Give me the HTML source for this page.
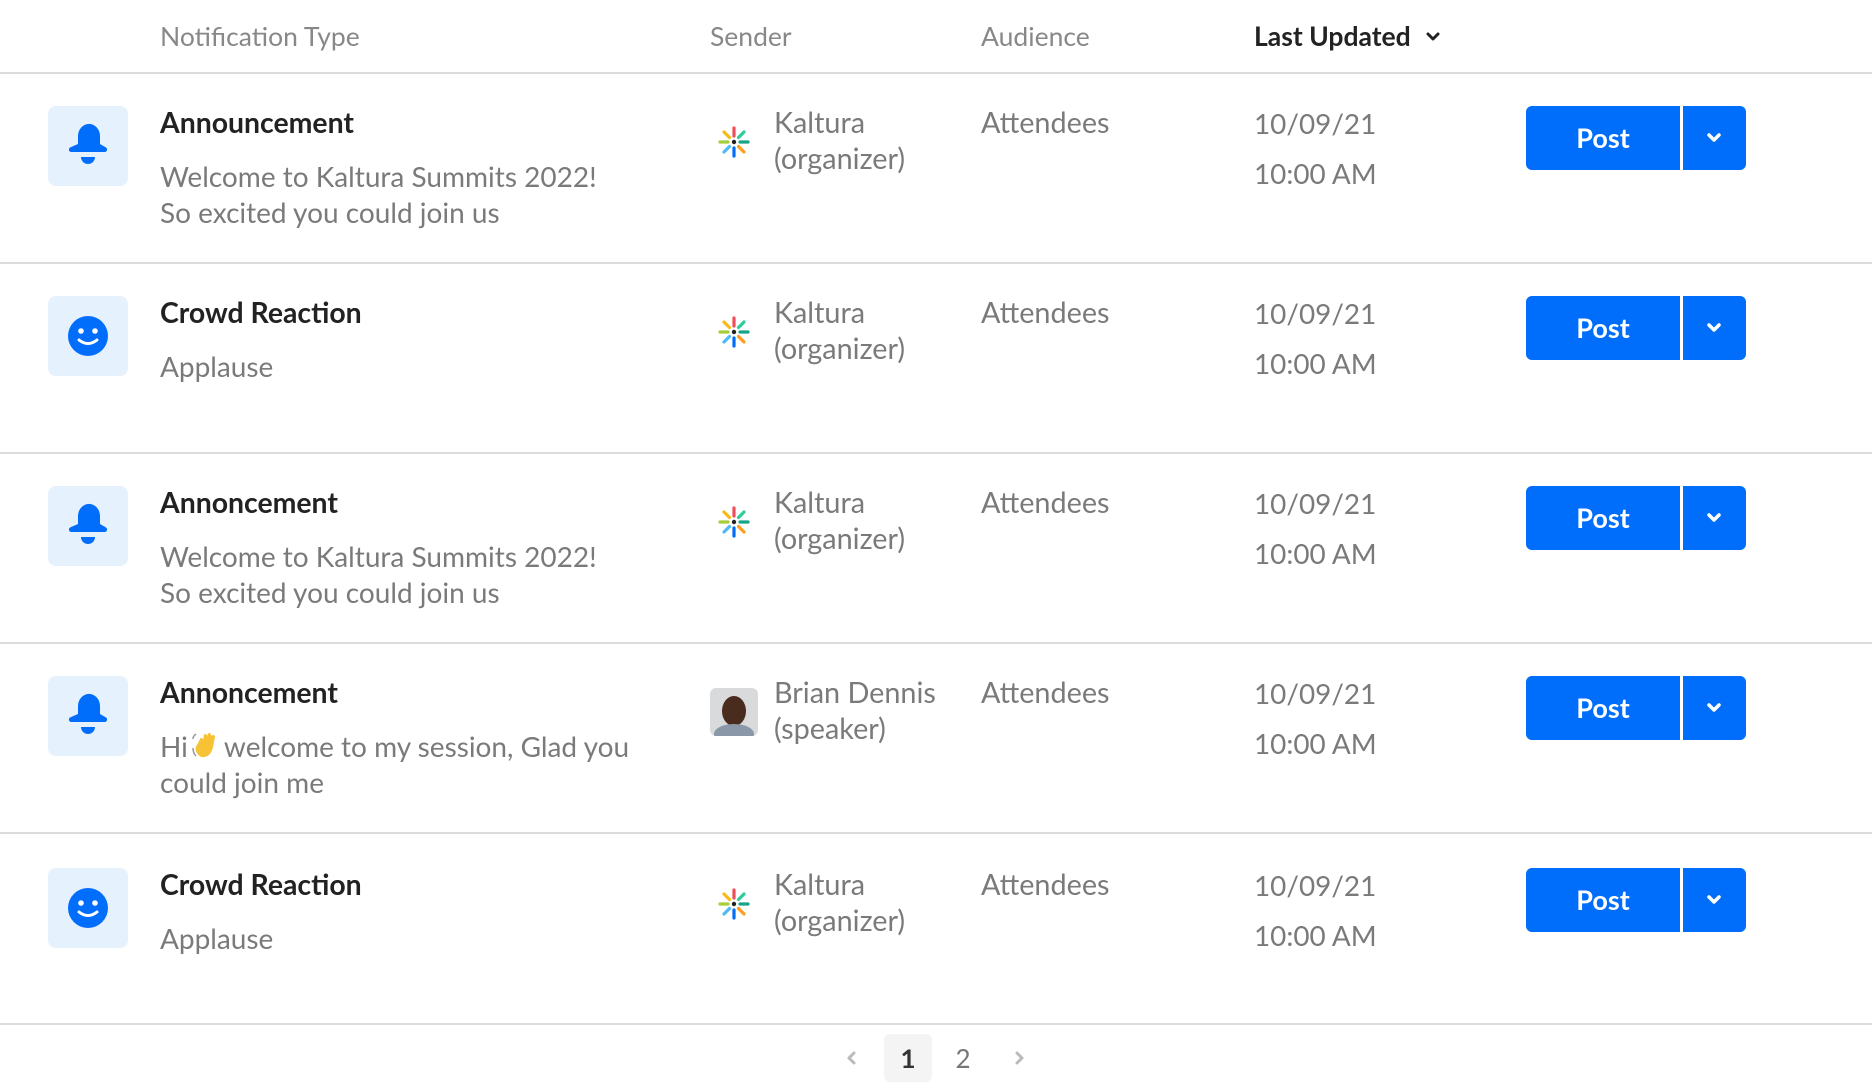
<!DOCTYPE html>
<html><head><meta charset="utf-8"><style>
*{margin:0;padding:0;box-sizing:border-box}
body{width:1872px;height:1090px;background:#fff;font-family:"Lato","Liberation Sans",sans-serif;position:relative;overflow:hidden}
.a{position:absolute;white-space:nowrap}
.h{font-size:26.5px;color:#888;top:20px}
.line{position:absolute;left:0;width:1872px;height:2px;background:#dcdcdc}
.box{position:absolute;left:48px;width:80px;height:80px;border-radius:8px;background:#e6f1fe}
.t{font-size:28.4px;font-weight:bold;color:#222;left:160px}
.d{font-size:28px;color:#7a7a7a;left:160px;line-height:36px}
.s{font-size:28.8px;color:#7a7a7a;left:774px;line-height:36px}
.au{font-size:28.8px;color:#7a7a7a;left:981px}
.dt{font-size:27.9px;color:#7a7a7a;left:1254px;line-height:50px}
.btn{position:absolute;left:1526px;width:220px;height:64px;border-radius:6px;background:#006efa;overflow:hidden}
.btn .p{position:absolute;left:0;top:0;width:154px;height:64px;line-height:64px;text-align:center;color:#fff;font-size:27px;font-weight:bold}
.btn .sep{position:absolute;left:154px;top:0;width:3px;height:64px;background:#fff}
.btn svg{position:absolute;left:178px;top:24px}
</style></head><body>
<div class="a h" style="left:160px">Notification Type</div>
<div class="a h" style="left:710px">Sender</div>
<div class="a h" style="left:981px">Audience</div>
<div class="a h" style="left:1254px;color:#222;font-weight:bold">Last Updated</div>
<svg class="a" style="left:1424px;top:28px" width="18" height="18" viewBox="0 0 18 18"><path d="M4 6l5 5 5-5" stroke="#222" stroke-width="3" fill="none" stroke-linecap="round" stroke-linejoin="round"/></svg>
<div class="line" style="top:72px"></div>

<!-- Row 1 -->
<div class="box" style="top:106px"><svg width="80" height="80" viewBox="0 0 80 80"><path d="M30 30a10 11 0 0 1 22 0v8l6 3.5a2.5 2.5 0 0 1 -1 4.5h-34a2.5 2.5 0 0 1 -1 -4.5l8 -3.5z" fill="#006efa"/><path d="M33 51h14a7 7 0 0 1 -14 0z" fill="#006efa"/></svg></div>
<div class="a t" style="top:106px">Announcement</div>
<div class="a d" style="top:158px">Welcome to Kaltura Summits 2022!<br>So excited you could join us</div>
<svg class="a" style="left:714px;top:122px" width="40" height="40" viewBox="-20 -20 40 40"><g stroke-width="3.2" stroke-linecap="round"><line x1="0" y1="-6" x2="0" y2="-14" stroke="#f04d5b"/><line x1="4.5" y1="-4.5" x2="10" y2="-10" stroke="#2ecc9b"/><line x1="6" y1="0" x2="14" y2="0" stroke="#17a58a"/><line x1="4.5" y1="4.5" x2="10" y2="10" stroke="#ff9e1b"/><line x1="0" y1="6" x2="0" y2="14" stroke="#006efa"/><line x1="-4.5" y1="4.5" x2="-10" y2="10" stroke="#4fb9f5"/><line x1="-6" y1="0" x2="-14" y2="0" stroke="#a6ce39"/><line x1="-4.5" y1="-4.5" x2="-10" y2="-10" stroke="#f9b916"/></g><circle r="2.2" fill="#222"/></svg>
<div class="a s" style="top:105px">Kaltura<br>(organizer)</div>
<div class="a au" style="top:106px">Attendees</div>
<div class="a dt" style="top:98px">10/09/21<br>10:00 AM</div>
<div class="btn" style="top:106px"><div class="p">Post</div><div class="sep"></div><svg width="20" height="16" viewBox="0 0 20 16"><path d="M5 5l5 5 5-5" stroke="#fff" stroke-width="3.5" fill="none" stroke-linecap="round" stroke-linejoin="round"/></svg></div>
<div class="line" style="top:262px"></div>

<!-- Row 2 -->
<div class="box" style="top:296px"><svg width="80" height="80" viewBox="0 0 80 80"><circle cx="40" cy="40" r="20" fill="#006efa"/><circle cx="33" cy="35" r="2.8" fill="#fff"/><circle cx="47" cy="35" r="2.8" fill="#fff"/><path d="M31 44q9 7 18 0" stroke="#fff" stroke-width="3" fill="none" stroke-linecap="round"/></svg></div>
<div class="a t" style="top:296px">Crowd Reaction</div>
<div class="a d" style="top:348px">Applause</div>
<svg class="a" style="left:714px;top:312px" width="40" height="40" viewBox="-20 -20 40 40"><g stroke-width="3.2" stroke-linecap="round"><line x1="0" y1="-6" x2="0" y2="-14" stroke="#f04d5b"/><line x1="4.5" y1="-4.5" x2="10" y2="-10" stroke="#2ecc9b"/><line x1="6" y1="0" x2="14" y2="0" stroke="#17a58a"/><line x1="4.5" y1="4.5" x2="10" y2="10" stroke="#ff9e1b"/><line x1="0" y1="6" x2="0" y2="14" stroke="#006efa"/><line x1="-4.5" y1="4.5" x2="-10" y2="10" stroke="#4fb9f5"/><line x1="-6" y1="0" x2="-14" y2="0" stroke="#a6ce39"/><line x1="-4.5" y1="-4.5" x2="-10" y2="-10" stroke="#f9b916"/></g><circle r="2.2" fill="#222"/></svg>
<div class="a s" style="top:295px">Kaltura<br>(organizer)</div>
<div class="a au" style="top:296px">Attendees</div>
<div class="a dt" style="top:288px">10/09/21<br>10:00 AM</div>
<div class="btn" style="top:296px"><div class="p">Post</div><div class="sep"></div><svg width="20" height="16" viewBox="0 0 20 16"><path d="M5 5l5 5 5-5" stroke="#fff" stroke-width="3.5" fill="none" stroke-linecap="round" stroke-linejoin="round"/></svg></div>
<div class="line" style="top:452px"></div>

<!-- Row 3 -->
<div class="box" style="top:486px"><svg width="80" height="80" viewBox="0 0 80 80"><path d="M30 30a10 11 0 0 1 22 0v8l6 3.5a2.5 2.5 0 0 1 -1 4.5h-34a2.5 2.5 0 0 1 -1 -4.5l8 -3.5z" fill="#006efa"/><path d="M33 51h14a7 7 0 0 1 -14 0z" fill="#006efa"/></svg></div>
<div class="a t" style="top:486px">Annoncement</div>
<div class="a d" style="top:538px">Welcome to Kaltura Summits 2022!<br>So excited you could join us</div>
<svg class="a" style="left:714px;top:502px" width="40" height="40" viewBox="-20 -20 40 40"><g stroke-width="3.2" stroke-linecap="round"><line x1="0" y1="-6" x2="0" y2="-14" stroke="#f04d5b"/><line x1="4.5" y1="-4.5" x2="10" y2="-10" stroke="#2ecc9b"/><line x1="6" y1="0" x2="14" y2="0" stroke="#17a58a"/><line x1="4.5" y1="4.5" x2="10" y2="10" stroke="#ff9e1b"/><line x1="0" y1="6" x2="0" y2="14" stroke="#006efa"/><line x1="-4.5" y1="4.5" x2="-10" y2="10" stroke="#4fb9f5"/><line x1="-6" y1="0" x2="-14" y2="0" stroke="#a6ce39"/><line x1="-4.5" y1="-4.5" x2="-10" y2="-10" stroke="#f9b916"/></g><circle r="2.2" fill="#222"/></svg>
<div class="a s" style="top:485px">Kaltura<br>(organizer)</div>
<div class="a au" style="top:486px">Attendees</div>
<div class="a dt" style="top:478px">10/09/21<br>10:00 AM</div>
<div class="btn" style="top:486px"><div class="p">Post</div><div class="sep"></div><svg width="20" height="16" viewBox="0 0 20 16"><path d="M5 5l5 5 5-5" stroke="#fff" stroke-width="3.5" fill="none" stroke-linecap="round" stroke-linejoin="round"/></svg></div>
<div class="line" style="top:642px"></div>

<!-- Row 4 -->
<div class="box" style="top:676px"><svg width="80" height="80" viewBox="0 0 80 80"><path d="M30 30a10 11 0 0 1 22 0v8l6 3.5a2.5 2.5 0 0 1 -1 4.5h-34a2.5 2.5 0 0 1 -1 -4.5l8 -3.5z" fill="#006efa"/><path d="M33 51h14a7 7 0 0 1 -14 0z" fill="#006efa"/></svg></div>
<div class="a t" style="top:676px">Annoncement</div>
<div class="a d" style="top:728px">Hi<svg width="32" height="30" viewBox="0 0 30 30" style="vertical-align:-4px;margin:0 2px"><path d="M10 26c-5-3-7-9-4-12l3-6c1-2 3-1 3 1l1-5c1-2 3-1 3 1l1-2c1-2 3-1 3 1l1 1c1-2 3-1 3 1l-2 10c-1 5-4 11-12 10z" fill="#f7c234"/><path d="M2 17q0 5 3 8M5 3q-3 2-3 5" stroke="#999" stroke-width="1.5" fill="none"/></svg>welcome to my session, Glad you<br>could join me</div>
<div class="a" style="left:710px;top:688px;width:48px;height:48px;border-radius:6px;background:#d9dadc;overflow:hidden"><div style="position:absolute;left:12px;top:8px;width:24px;height:30px;border-radius:50%;background:#4a2c1e"></div><div style="position:absolute;left:4px;top:36px;width:40px;height:20px;border-radius:50% 50% 0 0;background:#8a97a8"></div></div>
<div class="a s" style="top:675px">Brian Dennis<br>(speaker)</div>
<div class="a au" style="top:676px">Attendees</div>
<div class="a dt" style="top:668px">10/09/21<br>10:00 AM</div>
<div class="btn" style="top:676px"><div class="p">Post</div><div class="sep"></div><svg width="20" height="16" viewBox="0 0 20 16"><path d="M5 5l5 5 5-5" stroke="#fff" stroke-width="3.5" fill="none" stroke-linecap="round" stroke-linejoin="round"/></svg></div>
<div class="line" style="top:832px"></div>

<!-- Row 5 -->
<div class="box" style="top:868px"><svg width="80" height="80" viewBox="0 0 80 80"><circle cx="40" cy="40" r="20" fill="#006efa"/><circle cx="33" cy="35" r="2.8" fill="#fff"/><circle cx="47" cy="35" r="2.8" fill="#fff"/><path d="M31 44q9 7 18 0" stroke="#fff" stroke-width="3" fill="none" stroke-linecap="round"/></svg></div>
<div class="a t" style="top:868px">Crowd Reaction</div>
<div class="a d" style="top:920px">Applause</div>
<svg class="a" style="left:714px;top:884px" width="40" height="40" viewBox="-20 -20 40 40"><g stroke-width="3.2" stroke-linecap="round"><line x1="0" y1="-6" x2="0" y2="-14" stroke="#f04d5b"/><line x1="4.5" y1="-4.5" x2="10" y2="-10" stroke="#2ecc9b"/><line x1="6" y1="0" x2="14" y2="0" stroke="#17a58a"/><line x1="4.5" y1="4.5" x2="10" y2="10" stroke="#ff9e1b"/><line x1="0" y1="6" x2="0" y2="14" stroke="#006efa"/><line x1="-4.5" y1="4.5" x2="-10" y2="10" stroke="#4fb9f5"/><line x1="-6" y1="0" x2="-14" y2="0" stroke="#a6ce39"/><line x1="-4.5" y1="-4.5" x2="-10" y2="-10" stroke="#f9b916"/></g><circle r="2.2" fill="#222"/></svg>
<div class="a s" style="top:867px">Kaltura<br>(organizer)</div>
<div class="a au" style="top:868px">Attendees</div>
<div class="a dt" style="top:860px">10/09/21<br>10:00 AM</div>
<div class="btn" style="top:868px"><div class="p">Post</div><div class="sep"></div><svg width="20" height="16" viewBox="0 0 20 16"><path d="M5 5l5 5 5-5" stroke="#fff" stroke-width="3.5" fill="none" stroke-linecap="round" stroke-linejoin="round"/></svg></div>
<div class="line" style="top:1023px"></div>

<!-- pagination -->
<svg class="a" style="left:844px;top:1050px" width="16" height="16" viewBox="0 0 16 16"><path d="M10 3l-5 5 5 5" stroke="#bbb" stroke-width="3" fill="none" stroke-linecap="round" stroke-linejoin="round"/></svg>
<div class="a" style="left:884px;top:1034px;width:48px;height:48px;border-radius:6px;background:#f4f4f4;text-align:center;line-height:48px;font-size:26px;font-weight:bold;color:#333">1</div>
<div class="a" style="left:948px;top:1034px;width:30px;height:48px;text-align:center;line-height:48px;font-size:26px;color:#777">2</div>
<svg class="a" style="left:1011px;top:1050px" width="16" height="16" viewBox="0 0 16 16"><path d="M6 3l5 5-5 5" stroke="#bbb" stroke-width="3" fill="none" stroke-linecap="round" stroke-linejoin="round"/></svg>
</body></html>
